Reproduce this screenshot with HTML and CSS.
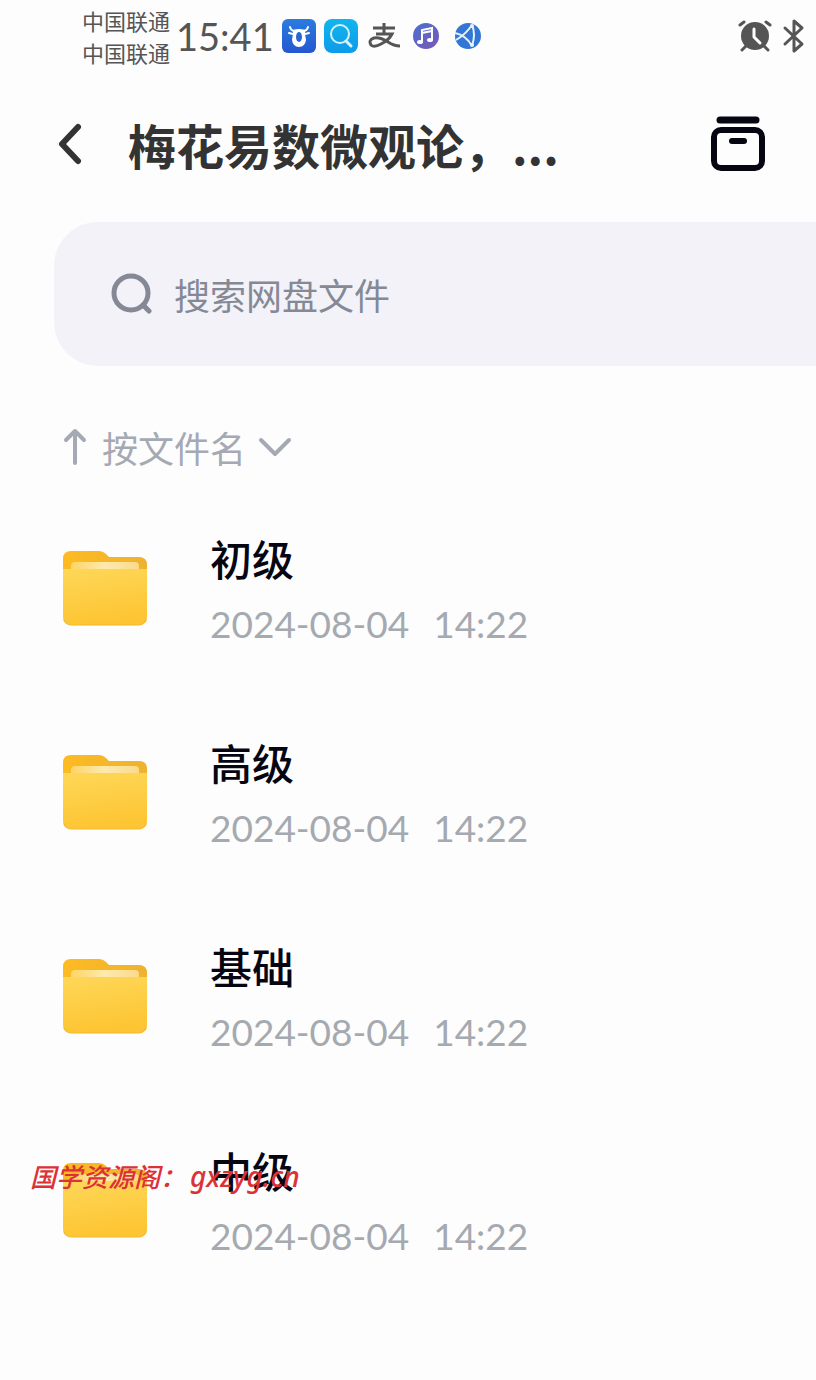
FILE: index.html
```html
<!DOCTYPE html>
<html lang="zh-CN">
<head>
  <meta charset="UTF-8">
  <meta name="viewport" content="width=device-width, initial-scale=1.0">
  <title>梅花易数微观论</title>
  <link rel="stylesheet" href="styles.css">
</head>
<body>
  <!-- Gradients and folder shape shared by the icons -->
  <svg class="defs" width="0" height="0" aria-hidden="true">
    <defs>
      <linearGradient id="folderBack" x1="0" y1="0" x2="1" y2="0">
        <stop offset="0" stop-color="#fdbb22"/>
        <stop offset="1" stop-color="#eeb22f"/>
      </linearGradient>
      <linearGradient id="folderLight" x1="0" y1="0" x2="1" y2="0">
        <stop offset="0" stop-color="#fdd565"/>
        <stop offset="0.5" stop-color="#fdeaae"/>
        <stop offset="1" stop-color="#fbd98a"/>
      </linearGradient>
      <linearGradient id="folderFront" x1="0" y1="0" x2="0.2" y2="1">
        <stop offset="0" stop-color="#fed758"/>
        <stop offset="1" stop-color="#fdc533"/>
      </linearGradient>
      <linearGradient id="musicFill" x1="0" y1="0" x2="1" y2="1">
        <stop offset="0" stop-color="#4a70cf"/>
        <stop offset="1" stop-color="#7c57b8"/>
      </linearGradient>
      <linearGradient id="bullFill" x1="0" y1="0" x2="0" y2="1">
        <stop offset="0" stop-color="#2b7be0"/>
        <stop offset="1" stop-color="#2457cf"/>
      </linearGradient>
      <linearGradient id="findFill" x1="0" y1="0" x2="0" y2="1">
        <stop offset="0" stop-color="#12b5ee"/>
        <stop offset="1" stop-color="#0d9be8"/>
      </linearGradient>
      <symbol id="folder" viewBox="0 0 86 76">
        <path d="M1 9Q1 1 9 1H37Q41 1 44 4L47 7H77Q85 7 85 15V50H1Z" fill="url(#folderBack)"/>
        <path d="M9 24V16Q9 12 13 12H73Q77 12 77 16V24Z" fill="url(#folderLight)"/>
        <path d="M1 19H85V67Q85 75 77 75H9Q1 75 1 67Z" fill="url(#folderFront)"/>
        <path d="M2 69Q4 75 9 75H77Q82 75 84 69" fill="none" stroke="#f3ba30" stroke-width="1"/>
      </symbol>
    </defs>
  </svg>

  <div class="status-bar">
    <div class="carriers">
      <span>中国联通</span>
      <span>中国联通</span>
    </div>
    <span class="clock">15:41</span>
    <div class="notifications">
      <svg width="34" height="34" viewBox="0 0 34 34">
        <rect width="34" height="34" rx="6" fill="url(#bullFill)"/>
        <path d="M8 8Q9 12 13 12M26 8Q25 12 21 12M7 14L11 15M27 14L23 15" fill="none" stroke="#fff" stroke-width="2" stroke-linecap="round"/>
        <path d="M11 11Q17 9 23 11L23 15L24 21Q23 28 17 28Q11 28 10 21L11 15Z" fill="#fff"/>
        <ellipse cx="17" cy="18" rx="3" ry="5" fill="#2766d5"/>
      </svg>
      <svg width="34" height="34" viewBox="0 0 34 34">
        <rect width="34" height="34" rx="8" fill="url(#findFill)"/>
        <circle cx="16" cy="15" r="9" fill="none" stroke="#d5f2fb" stroke-width="2"/>
        <path d="M22 22L27 27" stroke="#d5f2fb" stroke-width="3" stroke-linecap="round"/>
      </svg>
      <svg class="pay" width="34" height="28" viewBox="0 0 34 28">
        <path d="M5 6H27M16 1V12M8 12H24Q21 18 13 22Q6 26 3 23Q0 18 6 16Q12 15 20 20Q26 24 32 24" fill="none" stroke="#555" stroke-width="3"/>
      </svg>
      <svg class="music" width="28" height="28" viewBox="0 0 28 28">
        <circle cx="14" cy="14" r="13" fill="url(#musicFill)"/>
        <path d="M10 20V8L20 6V18M10 11L20 9" fill="none" stroke="#fff" stroke-width="2"/>
        <ellipse cx="8" cy="20" rx="3" ry="2" fill="#fff"/>
        <ellipse cx="18" cy="18" rx="3" ry="2" fill="#fff"/>
      </svg>
      <svg class="globe" width="28" height="28" viewBox="0 0 28 28">
        <circle cx="14" cy="14" r="13" fill="#3276d6"/>
        <path d="M1 11Q12 13 18 24M2 18Q12 12 18 3M18 3Q22 12 18 24" fill="none" stroke="#e4f1ff" stroke-width="2"/>
        <circle cx="18" cy="4" r="2" fill="#e4f1ff"/>
        <circle cx="18" cy="23" r="2" fill="#e4f1ff"/>
      </svg>
    </div>
    <div class="indicators">
      <svg width="34" height="34" viewBox="0 0 34 34">
        <circle cx="17" cy="17" r="14" fill="#555"/>
        <path d="M2 6L6 3M32 6L28 3M8 27L4 31M26 27L30 31" stroke="#555" stroke-width="3" stroke-linecap="round"/>
        <path d="M16 10V18L22 24" fill="none" stroke="#fff" stroke-width="3" stroke-linecap="round" stroke-linejoin="round"/>
      </svg>
      <svg width="24" height="36" viewBox="0 0 24 36">
        <path d="M3 10L20 26L12 33V3L20 10L3 26" fill="none" stroke="#555" stroke-width="3" stroke-linejoin="round" stroke-linecap="round"/>
      </svg>
    </div>
  </div>

  <header class="top-bar">
    <button class="icon-button" type="button" aria-label="返回">
      <svg width="24" height="42" viewBox="0 0 24 42">
        <path d="M20 4L4 21L20 38" fill="none" stroke="#333" stroke-width="6" stroke-linecap="round" stroke-linejoin="round"/>
      </svg>
    </button>
    <h1>梅花易数微观论，...</h1>
    <button class="icon-button" type="button" aria-label="收纳">
      <svg width="56" height="56" viewBox="0 0 56 56">
        <path d="M10 4H46" stroke="#050611" stroke-width="7" stroke-linecap="round"/>
        <rect x="4" y="14" width="48" height="38" rx="7" fill="none" stroke="#050611" stroke-width="6"/>
        <path d="M22 25H34" stroke="#050611" stroke-width="6" stroke-linecap="round"/>
      </svg>
    </button>
  </header>

  <main>
    <label class="search">
      <svg width="42" height="42" viewBox="0 0 42 42">
        <circle cx="21" cy="20" r="17" fill="none" stroke="#858995" stroke-width="5"/>
        <path d="M33 32L39 38" stroke="#858995" stroke-width="5" stroke-linecap="round"/>
      </svg>
      <input type="search" placeholder="搜索网盘文件" aria-label="搜索网盘文件">
    </label>

    <button class="sort" type="button">
      <svg width="26" height="38" viewBox="0 0 26 38">
        <path d="M13 35V4M4 12L13 3L22 12" fill="none" stroke="#a5a9b4" stroke-width="4" stroke-linecap="round" stroke-linejoin="round"/>
      </svg>
      <span>按文件名</span>
      <svg width="34" height="22" viewBox="0 0 34 22">
        <path d="M3 4L17 18L31 4" fill="none" stroke="#a5a9b4" stroke-width="4" stroke-linecap="round" stroke-linejoin="round"/>
      </svg>
    </button>

    <ul class="files">
      <li>
        <svg class="folder"><use href="#folder"/></svg>
        <div class="info">
          <a href="#">初级</a>
          <div class="date"><span>2024-08-04</span> <span>14:22</span></div>
        </div>
      </li>
      <li>
        <svg class="folder"><use href="#folder"/></svg>
        <div class="info">
          <a href="#">高级</a>
          <div class="date"><span>2024-08-04</span> <span>14:22</span></div>
        </div>
      </li>
      <li>
        <svg class="folder"><use href="#folder"/></svg>
        <div class="info">
          <a href="#">基础</a>
          <div class="date"><span>2024-08-04</span> <span>14:22</span></div>
        </div>
      </li>
      <li>
        <svg class="folder"><use href="#folder"/></svg>
        <div class="info">
          <a href="#">中级</a>
          <div class="date"><span>2024-08-04</span> <span>14:22</span></div>
        </div>
        <div class="watermark"><span>国学资源阁：</span><span class="site">gxzyg.cn</span></div>
      </li>
    </ul>
  </main>
</body>
</html>
```
FILE: styles.css
```css
* {
  box-sizing: border-box;
}

body {
  margin: 0;
  min-height: 100vh;
  background-color: #fdfdfd;
  color: #050611;
  font-family: "Noto Sans CJK SC", sans-serif;
  overflow-x: hidden;
}

svg {
  display: block;
  flex-shrink: 0;
}

.defs {
  position: absolute;
}

button {
  border: 0;
  padding: 0;
  background: none;
  color: inherit;
  font-family: inherit;
  cursor: pointer;
}

/* Status bar */
.status-bar {
  display: flex;
  align-items: center;
  height: 72px;
  padding: 0 10px 0 82px;
  color: #555;
}

.carriers {
  display: flex;
  flex-direction: column;
  font-size: 22px;
  line-height: 32px;
}

.clock {
  margin-left: 6px;
  font-family: Lato, sans-serif;
  font-size: 38px;
  line-height: 48px;
}

.notifications {
  display: flex;
  align-items: center;
  gap: 8px;
  margin-left: 8px;
}

.music,
.pay {
  margin-left: 2px;
}

.globe {
  margin-left: 6px;
}

.indicators {
  display: flex;
  align-items: center;
  gap: 10px;
  margin-left: auto;
}

/* Title */
.top-bar {
  display: flex;
  align-items: center;
  height: 144px;
  padding: 0 50px 0 58px;
}

.top-bar h1 {
  flex: 1;
  margin: 0 0 0 46px;
  color: #333;
  font-size: 48px;
  font-weight: 700;
  line-height: 72px;
  white-space: nowrap;
}

/* Search */
.search {
  display: flex;
  align-items: center;
  gap: 22px;
  height: 144px;
  margin: 6px 0 0 54px;
  padding-left: 56px;
  border-radius: 44px 0 0 44px;
  background-color: #f2f2f8;
}

.search input {
  flex: 1;
  min-width: 0;
  padding: 0;
  border: 0;
  outline: 0;
  background: none;
  font-family: inherit;
  font-size: 36px;
  line-height: 54px;
}

.search input::placeholder {
  color: #858995;
  opacity: 1;
}

.sort {
  display: flex;
  align-items: center;
  gap: 12px;
  margin: 54px 0 0 62px;
  color: #a5a9b4;
  font-size: 36px;
  line-height: 54px;
}

.sort span {
  margin-left: 2px;
}

/* File list */
.files {
  margin: 12px 0 0;
  padding: 0;
  list-style: none;
}

.files li {
  position: relative;
  display: flex;
  align-items: center;
  gap: 62px;
  height: 204px;
  padding-left: 62px;
}

.folder {
  width: 86px;
  height: 76px;
}

.info {
  padding-top: 4px;
}

.info a {
  display: block;
  color: #050611;
  font-size: 42px;
  font-weight: 500;
  line-height: 64px;
  text-decoration: none;
}

.date {
  display: flex;
  gap: 24px;
  margin-top: 4px;
  color: #a5a9b0;
  font-family: Lato, sans-serif;
  font-size: 37px;
  line-height: 60px;
}

.watermark {
  position: absolute;
  top: 58px;
  left: 30px;
  display: flex;
  align-items: center;
  gap: 4px;
  color: #dc3237;
  font-size: 26px;
  font-style: italic;
  font-weight: 500;
  line-height: 40px;
}

.site {
  font-family: "Noto Sans", sans-serif;
  font-size: 28px;
}
```
